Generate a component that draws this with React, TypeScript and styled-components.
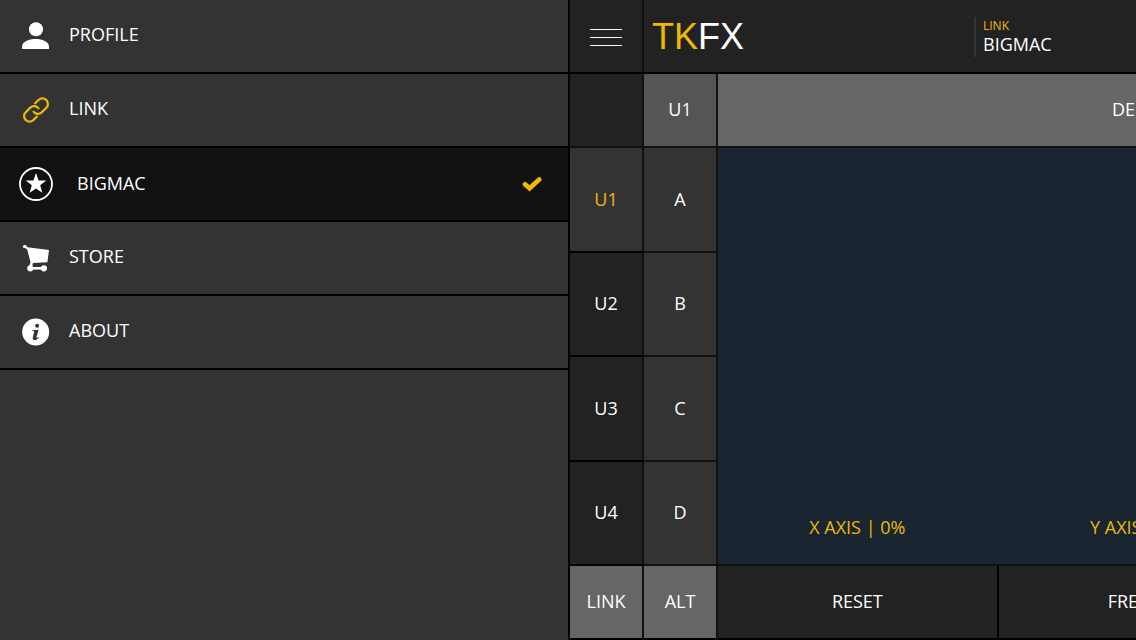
import React from "react";
import styled, { createGlobalStyle } from "styled-components";

const gold = "#f0b800";
const line = "#111";

const GlobalStyle = createGlobalStyle`
  *, *::before, *::after { box-sizing: border-box; }
  body {
    margin: 0;
    background: #222;
    color: #fff;
    font: 18px/24px "Open Sans", sans-serif;
    overflow-x: hidden;
  }
  button, a { font: inherit; color: inherit; text-decoration: none; }
  button { border: 0; padding: 0; background: none; cursor: pointer; }
`;

const Shell = styled.div`
  display: flex;
  min-height: 100vh;
  overflow: hidden;
`;

const Drawer = styled.nav`
  flex: 0 0 50%;
  background: #333;
`;

const DrawerItem = styled.a<{ $selected?: boolean }>`
  display: flex;
  align-items: center;
  gap: ${(p) => (p.$selected ? 23 : 15)}px;
  height: 74px;
  padding: 0 26px 0 18px;
  border-bottom: 2px solid #000;
  background: ${(p) => (p.$selected ? line : "#333")};

  svg { flex: none; }
`;

const DrawerLabel = styled.span<{ $selected?: boolean }>`
  flex: 1;
  padding-bottom: ${(p) => (p.$selected ? 2 : 4)}px;
`;

const Stage = styled.main`
  flex: 0 0 100%;
  display: flex;
  flex-direction: column;
  border-left: 2px solid #000;
`;

const Header = styled.header`
  display: flex;
  align-items: center;
  height: 74px;
  padding-top: 2px;
  border-bottom: 2px solid #000;
  background: #222;
`;

const MenuButton = styled.button`
  display: flex;
  flex-direction: column;
  align-items: center;
  justify-content: center;
  gap: 7px;
  align-self: stretch;
  width: 74px;
  margin-top: -2px;
  padding-top: 3px;
  border-right: 2px solid ${line};
`;

const MenuBar = styled.span`
  width: 32px;
  height: 1px;
  background: #fff;
`;

const Logo = styled.h1`
  flex: 0 0 330px;
  margin: 0;
  padding-left: 8px;
  font: 36px/40px "Liberation Sans", Arial, sans-serif;
`;

const Gold = styled.span`
  color: ${gold};
`;

const LinkStatus = styled.div`
  height: 40px;
  padding-left: 7px;
  border-left: 2px solid #333;
`;

const LinkCaption = styled.div`
  color: ${gold};
  font-size: 12px;
  line-height: 17px;
`;

const LinkName = styled.div`
  line-height: 20px;
`;

const Body = styled.div`
  flex: 1;
  display: flex;
`;

const Column = styled.div`
  flex: 0 0 74px;
  display: flex;
  flex-direction: column;
`;

const Cell = styled.button<{ $bg: string; $tall?: boolean; $active?: boolean; $edge?: string }>`
  flex: ${(p) => (p.$tall ? "1 1 0" : "0 0 74px")};
  display: flex;
  align-items: center;
  justify-content: center;
  padding-bottom: ${(p) => (p.$tall ? 1 : 2)}px;
  border-right: 2px solid ${line};
  border-bottom: 2px solid ${(p) => p.$edge ?? line};
  background: ${(p) => p.$bg};
  color: ${(p) => (p.$active ? gold : "#fff")};
`;

const Main = styled.div`
  flex: 1;
  display: flex;
  flex-direction: column;
  padding-right: 144px;
`;

const EffectButton = styled.button`
  height: 74px;
  padding-bottom: 2px;
  border-bottom: 2px solid ${line};
  background: #666;
`;

const Pad = styled.section`
  flex: 1;
  display: grid;
  grid-template-columns: repeat(3, 1fr);
  align-items: end;
  padding-bottom: 25px;
  border-bottom: 2px solid ${line};
  background: #192530;
  color: ${gold};
  text-align: center;
`;

const Axis = styled.span`
  padding-right: 2px;
`;

const Actions = styled.div`
  display: grid;
  grid-template-columns: repeat(3, 1fr);
  height: 74px;
`;

const Action = styled.button`
  padding-bottom: 2px;
  border-right: 2px solid #000;
  border-bottom: 2px solid #000;
  background: #222;
`;

const ProfileIcon = () => (
  <svg width="36" height="36" viewBox="0 0 36 36" fill="#fff" aria-hidden="true">
    <circle cx="18" cy="11.2" r="7" />
    <path d="M4 31v-2.200C4 23.500 11 21 17.500 21S31 23.500 31 28.800V31z" />
  </svg>
);

const ChainIcon = () => (
  <svg width="36" height="36" viewBox="0 0 36 36" fill="none" stroke={gold} strokeWidth="2.300" aria-hidden="true">
    <path d="M16.500 12L20.500 8a5.500 5.500 0 0 1 7.800 7.800L23.700 20.400a5.500 5.500 0 0 1-8.600-1.400" />
    <path d="M19.500 24L15.500 28a5.500 5.500 0 0 1-7.800-7.800L12.300 15.600a5.500 5.500 0 0 1 8.600 1.400" />
  </svg>
);

const StarIcon = () => (
  <svg width="36" height="36" viewBox="0 0 36 36" aria-hidden="true">
    <circle cx="18" cy="18" r="16" fill="none" stroke="#fff" strokeWidth="1.800" />
    <path fill="#fff" d="M18 7l2.600 7.400 7.600.2-6 4.700 2.100 7.500-6.300-4.400-6.300 4.400 2.100-7.500-6-4.700 7.600-.2z" />
  </svg>
);

const CartIcon = () => (
  <svg width="36" height="36" viewBox="0 0 36 36" fill="#fff" aria-hidden="true">
    <path d="M6.500 5C8 4.800 9 5.800 9.400 7.300L31 10 29.400 22.300 15 23 14 27h-3.500L12.600 22.500 9.200 9.500 7 8z" />
    <circle cx="6.500" cy="6.500" r="1.600" />
    <circle cx="12.300" cy="28.300" r="3.100" />
    <circle cx="25.900" cy="28.300" r="3.100" />
    <path d="M12 27h14v2.600H12z" />
  </svg>
);

const InfoIcon = () => (
  <svg width="36" height="36" viewBox="0 0 36 36" aria-hidden="true">
    <circle cx="17.700" cy="18" r="13.500" fill="#fff" />
    <circle cx="19.100" cy="11.700" r="2" fill="#333" />
    <path fill="#333" d="M14.300 16.300l6.200-.6-2 7.600c-.2 1 .5 1 2 -.6l.5.500c-1.600 2.300-3.300 3-4.600 2.800-1.500-.2-2-1.200-1.600-2.800l1.300-4.800c.2-1-.1-1.300-1.900-1.300z" />
  </svg>
);

const CheckIcon = () => (
  <svg width="20" height="16" viewBox="0 0 20 16" fill="none" aria-hidden="true">
    <path d="M3 8.200L7.600 12.300 17.200 3.500" stroke={gold} strokeWidth="4.600" strokeLinecap="round" />
  </svg>
);

const menu = [
  { label: "PROFILE", Icon: ProfileIcon },
  { label: "LINK", Icon: ChainIcon },
  { label: "BIGMAC", Icon: StarIcon, selected: true },
  { label: "STORE", Icon: CartIcon },
  { label: "ABOUT", Icon: InfoIcon },
];

const units = ["U1", "U2", "U3", "U4"];
const banks = ["A", "B", "C", "D"];

export default function App() {
  return (
    <>
      <GlobalStyle />
      <Shell>
        <Drawer>
          {menu.map(({ label, Icon, selected }) => (
            <DrawerItem key={label} href="#" $selected={selected}>
              <Icon />
              <DrawerLabel $selected={selected}>{label}</DrawerLabel>
              {selected && <CheckIcon />}
            </DrawerItem>
          ))}
        </Drawer>
        <Stage>
          <Header>
            <MenuButton aria-label="Menu">
              <MenuBar />
              <MenuBar />
              <MenuBar />
            </MenuButton>
            <Logo><Gold>TK</Gold>FX</Logo>
            <LinkStatus>
              <LinkCaption>LINK</LinkCaption>
              <LinkName>BIGMAC</LinkName>
            </LinkStatus>
          </Header>
          <Body>
            <Column>
              <Cell as="div" $bg="#222" />
              {units.map((unit, i) => (
                <Cell key={unit} $tall $active={i === 0} $bg={i === 0 ? "#333" : "#222"} $edge="#000">
                  {unit}
                </Cell>
              ))}
              <Cell $bg="#666" $edge="#000">LINK</Cell>
            </Column>
            <Column>
              <Cell $bg="#555">U1</Cell>
              {banks.map((bank) => (
                <Cell key={bank} $tall $bg="#333">{bank}</Cell>
              ))}
              <Cell $bg="#666" $edge="#000">ALT</Cell>
            </Column>
            <Main>
              <EffectButton>DELAY</EffectButton>
              <Pad>
                <Axis>X AXIS | 0%</Axis>
                <Axis>Y AXIS | 0%</Axis>
              </Pad>
              <Actions>
                <Action>RESET</Action>
                <Action>FREEZE</Action>
                <Action aria-label="More" />
              </Actions>
            </Main>
          </Body>
        </Stage>
      </Shell>
    </>
  );
}
